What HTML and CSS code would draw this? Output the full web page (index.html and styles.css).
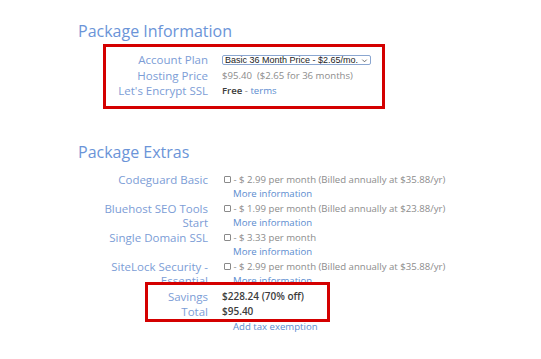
FILE: index.html
```html
<!DOCTYPE html>
<html lang="en">
<head>
<meta charset="utf-8">
<title>Package Information</title>
<link rel="stylesheet" href="styles.css">
</head>
<body>
<main class="page">
  <h2 class="section-title">Package Information</h2>
  <div class="rows info">
    <div class="label">Account Plan</div>
    <div class="value">
      <span class="select">Basic 36 Month Price - $2.65/mo.<svg class="chev" viewBox="0 0 8 8" width="7" height="7"><path d="M1.5 3 L4 5.5 L6.5 3" fill="none" stroke="#555" stroke-width="1"/></svg></span>
    </div>
    <div class="label">Hosting Price</div>
    <div class="value muted">$95.40&nbsp; ($2.65 for 36 months)</div>
    <div class="label">Let's Encrypt SSL</div>
    <div class="value"><strong class="strong">Free</strong> <span class="muted">-</span> <a class="link" href="#">terms</a></div>
  </div>

  <h2 class="section-title extras-title">Package Extras</h2>
  <div class="rows extras">
    <div class="label">Codeguard Basic</div>
    <div class="value">
      <div class="muted"><span class="check"></span> - $ 2.99 per month (Billed annually at $35.88/yr)</div>
      <a class="link indent" href="#">More information</a>
    </div>
    <div class="label">Bluehost SEO Tools<br>Start</div>
    <div class="value">
      <div class="muted"><span class="check"></span> - $ 1.99 per month (Billed annually at $23.88/yr)</div>
      <a class="link indent" href="#">More information</a>
    </div>
    <div class="label">Single Domain SSL</div>
    <div class="value">
      <div class="muted"><span class="check"></span> - $ 3.33 per month</div>
      <a class="link indent" href="#">More information</a>
    </div>
    <div class="label">SiteLock Security -<br>Essential</div>
    <div class="value">
      <div class="muted"><span class="check"></span> - $ 2.99 per month (Billed annually at $35.88/yr)</div>
      <a class="link indent" href="#">More information</a>
    </div>
  </div>
  <div class="rows totals">
    <div class="label">Savings</div>
    <div class="value strong">$228.24 (70% off)</div>
    <div class="label">Total</div>
    <div class="value strong">$95.40</div>
    <div class="label"></div>
    <div class="value"><a class="link indent" href="#">Add tax exemption</a></div>
  </div>

  <div class="highlight highlight-info" aria-hidden="true"></div>
  <div class="highlight highlight-total" aria-hidden="true"></div>
</main>
</body>
</html>
```

FILE: styles.css
```css
html, body {
  margin: 0;
  padding: 0;
  background: #ffffff;
}

body {
  font-family: "Open Sans", "Noto Sans", sans-serif;
}

.page {
  position: relative;
  width: 541px;
  height: 359px;
  padding-top: 20px;
  box-sizing: border-box;
  overflow: hidden;
}

.section-title {
  margin: 0 0 10px 78px;
  font-size: 16px;
  line-height: 22px;
  font-weight: 400;
  color: #6b94d8;
}

.extras-title {
  margin-top: 42px;
}

.rows {
  display: grid;
  grid-template-columns: 130px auto;
  column-gap: 14px;
  justify-content: start;
  align-items: start;
  margin-left: 78px;
}

.label {
  text-align: right;
  font-size: 11.5px;
  color: #7c9dd6;
}

.value {
  font-size: 9.6px;
  color: #8c8c8c;
}

.info .label,
.info .value {
  line-height: 15.5px;
}

.extras .label,
.extras .value {
  line-height: 14.5px;
}

.totals .label,
.totals .value {
  line-height: 15px;
}

.totals .strong {
  font-size: 10px;
}

.muted {
  color: #8c8c8c;
}

.strong {
  font-weight: 600;
  color: #3c3c3c;
}

.link {
  color: #5b8ccf;
  text-decoration: none;
}

.indent {
  display: inline-block;
  margin-left: 11px;
}

.check {
  display: inline-block;
  width: 5px;
  height: 5px;
  margin-left: 2px;
  border: 1px solid #8a8a8a;
  border-radius: 1px;
  vertical-align: 0;
}

.select {
  display: inline-flex;
  align-items: center;
  justify-content: space-between;
  box-sizing: border-box;
  width: 149px;
  height: 10px;
  padding: 0 2px 0 2px;
  border: 1px solid #8aa6d0;
  border-radius: 2px;
  font-family: "Liberation Sans", Arial, sans-serif;
  font-size: 9px;
  line-height: 8px;
  color: #222222;
  vertical-align: middle;
}

.chev {
  flex: none;
}

.highlight {
  position: absolute;
  box-sizing: border-box;
  border: 3px solid #d40000;
  pointer-events: none;
}

.highlight-info {
  left: 103px;
  top: 44px;
  width: 282px;
  height: 65px;
}

.highlight-total {
  left: 145px;
  top: 282px;
  width: 185px;
  height: 40px;
}
```
